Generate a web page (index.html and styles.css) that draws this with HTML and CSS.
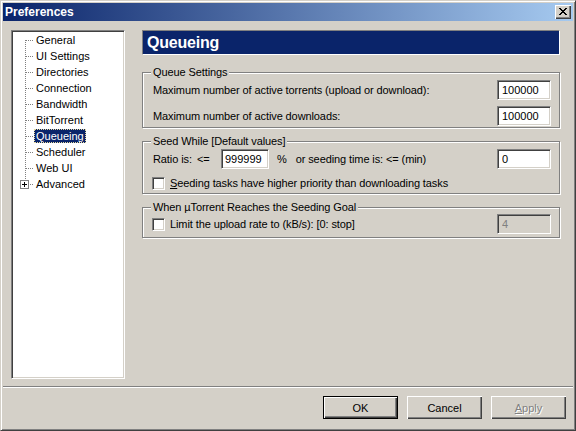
FILE: index.html
```
<!DOCTYPE html>
<html>
<head>
<meta charset="utf-8">
<title>Preferences</title>
<link rel="stylesheet" href="styles.css">
</head>
<body>
<div class="window">
  <div class="titlebar">
    <span class="title">Preferences</span>
    <span class="close">
      <svg width="8" height="7" viewBox="0 0 8 7" shape-rendering="crispEdges">
        <rect x="0" y="0" width="2" height="1"/><rect x="6" y="0" width="2" height="1"/>
        <rect x="1" y="1" width="2" height="1"/><rect x="5" y="1" width="2" height="1"/>
        <rect x="2" y="2" width="4" height="1"/>
        <rect x="3" y="3" width="2" height="1"/>
        <rect x="2" y="4" width="4" height="1"/>
        <rect x="1" y="5" width="2" height="1"/><rect x="5" y="5" width="2" height="1"/>
        <rect x="0" y="6" width="2" height="1"/><rect x="6" y="6" width="2" height="1"/>
      </svg>
    </span>
  </div>

  <div class="main">
    <div class="tree">
      <ul class="nodes">
        <li class="node first"><span class="label">General</span></li>
        <li class="node"><span class="label">UI Settings</span></li>
        <li class="node"><span class="label">Directories</span></li>
        <li class="node"><span class="label">Connection</span></li>
        <li class="node"><span class="label">Bandwidth</span></li>
        <li class="node"><span class="label">BitTorrent</span></li>
        <li class="node"><span class="label selected">Queueing</span></li>
        <li class="node"><span class="label">Scheduler</span></li>
        <li class="node"><span class="label">Web UI</span></li>
        <li class="node last"><span class="expander"></span><span class="label">Advanced</span></li>
      </ul>
    </div>

    <div class="panel">
      <div class="header">Queueing</div>

      <div class="group g1">
        <span class="caption">Queue Settings</span>
        <div class="row">
          <span>Maximum number of active torrents (upload or download):</span>
          <input class="edit push" type="text" value="100000">
        </div>
        <div class="row gap">
          <span>Maximum number of active downloads:</span>
          <input class="edit push" type="text" value="100000">
        </div>
      </div>

      <div class="group g2">
        <span class="caption">Seed While [Default values]</span>
        <div class="row">
          <span class="ratio-label">Ratio is:</span>
          <span class="le">&lt;=</span>
          <input class="edit ratio" type="text" value="999999">
          <span class="pct">%</span>
          <span class="seedtime">or seeding time is: &lt;= (min)</span>
          <input class="edit push" type="text" value="0">
        </div>
        <div class="check-row gap">
          <span class="checkbox"></span>
          <span><u>S</u>eeding tasks have higher priority than downloading tasks</span>
        </div>
      </div>

      <div class="group g3">
        <span class="caption">When µTorrent Reaches the Seeding Goal</span>
        <div class="row">
          <span class="checkbox"></span>
          <span>Limit the upload rate to (kB/s): [0: stop]</span>
          <input class="edit push disabled" type="text" value="4" disabled>
        </div>
      </div>
    </div>
  </div>

  <div class="separator"></div>

  <div class="buttons">
    <span class="btn default">OK</span>
    <span class="btn">Cancel</span>
    <span class="btn disabled"><u>A</u>pply</span>
  </div>
</div>
</body>
</html>
```

FILE: styles.css
```
* {
  box-sizing: border-box;
}

body {
  margin: 0;
  background: #d4d0c8;
  font-family: "Liberation Sans", Arial, sans-serif;
  font-size: 11px;
  color: #000;
}

.window {
  width: 576px;
  height: 431px;
  border: 1px solid;
  border-color: #d4d0c8 #404040 #404040 #d4d0c8;
  box-shadow: inset 1px 1px 0 #fff, inset -1px -1px 0 #808080;
  padding: 2px;
  display: flex;
  flex-direction: column;
  background: #d4d0c8;
}

/* title bar */
.titlebar {
  flex: none;
  height: 18px;
  display: flex;
  align-items: center;
  padding-left: 2px;
  background: linear-gradient(to right, #0a246a, #a6caf0);
  color: #fff;
}

.title {
  font-weight: bold;
  font-size: 12px;
}

.close {
  margin-left: auto;
  margin-right: 2px;
  width: 16px;
  height: 14px;
  padding: 3px 0 0 4px;
  background: #d4d0c8;
  box-shadow: inset 1px 1px 0 #fff, inset -1px -1px 0 #404040, inset -2px -2px 0 #808080;
}

.close svg {
  display: block;
  fill: #000;
}

/* main area */
.main {
  flex: none;
  height: 365px;
  display: flex;
  padding: 9px 0 0 8px;
}

.tree {
  width: 114px;
  height: 349px;
  background: #fff;
  border: 1px solid;
  border-color: #808080 #fff #fff #808080;
  box-shadow: inset 1px 1px 0 #404040, inset -1px -1px 0 #d4d0c8;
  padding: 1px;
}

.nodes {
  list-style: none;
  margin: 0;
  padding: 0;
}

.node {
  position: relative;
  height: 16px;
  display: flex;
  align-items: center;
  padding-left: 21px;
}

.node::before {
  content: "";
  position: absolute;
  left: 12px;
  top: 0;
  width: 1px;
  height: 16px;
  background: repeating-linear-gradient(to bottom, #808080 0 1px, transparent 1px 2px);
}

.node.first::before {
  top: 8px;
  height: 8px;
}

.node.last::before {
  height: 4px;
}

.node::after {
  content: "";
  position: absolute;
  left: 13px;
  top: 8px;
  width: 8px;
  height: 1px;
  background: repeating-linear-gradient(to right, #808080 0 1px, transparent 1px 2px);
}

.node.last::after {
  left: 17px;
  width: 4px;
}

.label {
  line-height: 14px;
  padding: 0 2px;
}

.label.selected {
  background: #0a246a;
  color: #fff;
  outline: 1px dotted #e8dca0;
  outline-offset: -1px;
}

.expander {
  position: absolute;
  left: 7px;
  top: 4px;
  width: 9px;
  height: 9px;
  border: 1px solid #808080;
  background: #fff;
}

.expander::before {
  content: "";
  position: absolute;
  left: 1px;
  top: 3px;
  width: 5px;
  height: 1px;
  background: #000;
}

.expander::after {
  content: "";
  position: absolute;
  left: 3px;
  top: 1px;
  width: 1px;
  height: 5px;
  background: #000;
}

/* right panel */
.panel {
  width: 418px;
  margin-left: 17px;
  display: flex;
  flex-direction: column;
}

.header {
  height: 25px;
  border: 1px solid;
  border-color: #808080 #fff #fff #808080;
  background: #0a246a;
  color: #fff;
  font-weight: bold;
  font-size: 16px;
  line-height: 23px;
  padding-left: 4px;
  letter-spacing: -0.2px;
}

.group {
  position: relative;
  border: 1px solid #808080;
  box-shadow: 1px 1px 0 #fff, inset 1px 1px 0 #fff;
  padding: 7px 8px 1px 10px;
  letter-spacing: -0.1px;
}

.caption {
  position: absolute;
  left: 8px;
  top: -7px;
  padding: 0 2px;
  line-height: 13px;
  background: #d4d0c8;
}

.g1 {
  margin-top: 17px;
}

.g2 {
  margin-top: 13px;
  padding-bottom: 2px;
}

.g3 {
  margin-top: 13px;
  padding-top: 6px;
  padding-bottom: 3px;
}

.row {
  height: 20px;
  display: flex;
  align-items: center;
}

.check-row {
  height: 16px;
  display: flex;
  align-items: center;
}

.gap {
  margin-top: 6px;
}

.edit {
  width: 54px;
  height: 20px;
  margin: 0;
  border: 1px solid;
  border-color: #808080 #fff #fff #808080;
  box-shadow: inset 1px 1px 0 #404040, inset -1px -1px 0 #d4d0c8;
  padding: 0 0 0 4px;
  background: #fff;
  font-family: "Liberation Sans", Arial, sans-serif;
  font-size: 11px;
  color: #000;
  outline: none;
}

.push {
  margin-left: auto;
}

.edit.disabled {
  background: #d4d0c8;
  color: #808080;
}

.ratio-label {
  width: 44px;
}

.le {
  width: 24px;
}

.edit.ratio {
  width: 48px;
  padding-left: 3px;
}

.pct {
  margin-left: 8px;
}

.seedtime {
  margin-left: 9px;
}

.checkbox {
  flex: none;
  width: 13px;
  height: 13px;
  margin-left: -1px;
  margin-right: 5px;
  background: #fff;
  border: 1px solid;
  border-color: #808080 #fff #fff #808080;
  box-shadow: inset 1px 1px 0 #404040, inset -1px -1px 0 #d4d0c8;
}

/* footer */
.separator {
  flex: none;
  height: 2px;
  border-top: 1px solid #808080;
  border-bottom: 1px solid #fff;
}

.buttons {
  display: flex;
  justify-content: flex-end;
  gap: 9px;
  padding: 8px 7px 0 0;
}

.btn {
  width: 75px;
  height: 23px;
  display: flex;
  align-items: center;
  justify-content: center;
  background: #d4d0c8;
  box-shadow: inset 1px 1px 0 #fff, inset -1px -1px 0 #404040, inset -2px -2px 0 #808080;
}

.btn.default {
  border: 1px solid #000;
}

.btn.disabled {
  color: #808080;
  text-shadow: 1px 1px 0 #fff;
}
```
